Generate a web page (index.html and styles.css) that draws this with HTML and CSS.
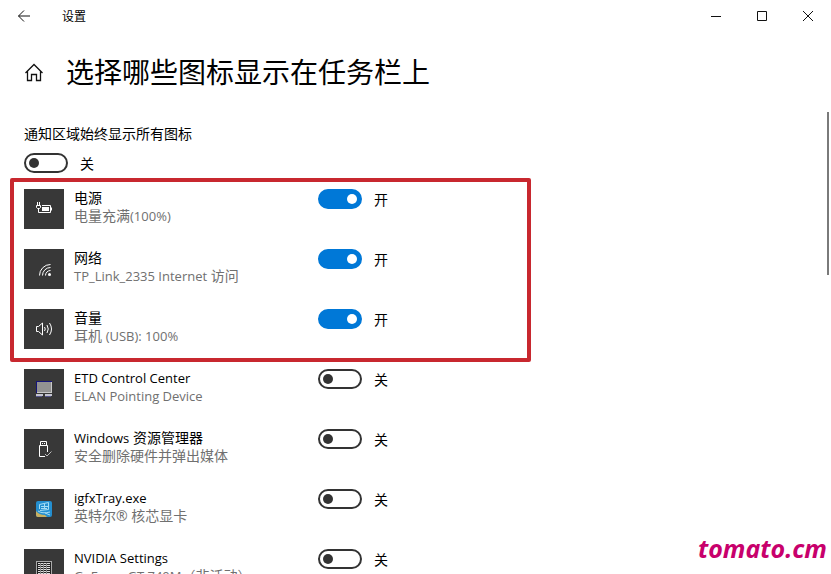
FILE: index.html
```html
<!DOCTYPE html>
<html lang="zh-CN">
<head>
  <meta charset="UTF-8">
  <meta name="viewport" content="width=device-width, initial-scale=1.0">
  <title>设置</title>
  <link rel="stylesheet" href="styles.css">
</head>
<body>
  <header class="titlebar">
    <button class="back" aria-label="返回">
      <svg width="14" height="14" viewBox="0 0 14 14"><path d="M13 7H1.500M7 1.500L1.500 7L7 12.500"/></svg>
    </button>
    <span class="app-name">设置</span>
    <div class="window-buttons">
      <button aria-label="最小化"><svg width="10" height="10" viewBox="0 0 10 10"><path d="M0 5.500H10"/></svg></button>
      <button aria-label="最大化"><svg width="10" height="10" viewBox="0 0 10 10"><path d="M.5 .5H9.500V9.500H.5Z"/></svg></button>
      <button aria-label="关闭"><svg width="10" height="10" viewBox="0 0 10 10"><path d="M0 0L10 10M10 0L0 10"/></svg></button>
    </div>
  </header>

  <main>
    <div class="heading">
      <a href="#" aria-label="主页">
        <svg width="20" height="20" viewBox="0 0 20 20"><path stroke-width="1.300" d="M1.500 11L10 2.500L18.500 11M3.500 9.500V18.500H7.500V12.500H12.500V18.500H16.500V9.500"/></svg>
      </a>
      <h1>选择哪些图标显示在任务栏上</h1>
    </div>

    <div class="show-all">
      <label for="all">通知区域始终显示所有图标</label>
      <div class="switch">
        <input type="checkbox" id="all"><span>关</span>
      </div>
    </div>

    <ul class="icons marked">
      <li>
        <div class="tile">
          <svg width="16" height="16" viewBox="0 0 16 16">
            <path d="M1.500 1V4M3.500 1V4M.5 4.500H4.500V6.500L3.500 7.500H1.500L.5 6.500ZM2.500 8V11.500H14.500V4.500H6M15.500 6.500V9.500"/>
            <path class="solid" d="M6 6H13V10H6Z"/>
          </svg>
        </div>
        <label for="power">电源<small>电量充满<span class="en">(100%)</span></small></label>
        <div class="switch"><input type="checkbox" id="power" checked><span>开</span></div>
      </li>
      <li>
        <div class="tile">
          <svg width="16" height="16" viewBox="0 0 16 16">
            <path d="M3.500 14.500A11 11 0 0 1 14.500 3.500M6.500 14.500A8 8 0 0 1 14.500 6.500M9.500 14.500A5 5 0 0 1 14.500 9.500"/>
            <circle class="solid" cx="13.500" cy="13.500" r="1.500"/>
          </svg>
        </div>
        <label for="network">网络<small><span class="en">TP_Link_2335 Internet</span> 访问</small></label>
        <div class="switch"><input type="checkbox" id="network" checked><span>开</span></div>
      </li>
      <li>
        <div class="tile">
          <svg width="16" height="16" viewBox="0 0 16 16">
            <path d="M.5 5.500H2.500L6.500 2V14L2.500 10.500H.5ZM8.500 6Q10 8 8.500 10M11 4Q13.500 8 11 12M13.500 2Q17.500 8 13.500 14"/>
          </svg>
        </div>
        <label for="volume">音量<small>耳机 <span class="en">(USB): 100%</span></small></label>
        <div class="switch"><input type="checkbox" id="volume" checked><span>开</span></div>
      </li>
    </ul>

    <ul class="icons">
      <li>
        <div class="tile">
          <svg class="color" width="16" height="16" viewBox="0 0 16 16">
            <path fill="#c8c8c8" d="M0 0H16V12H0Z"/>
            <path fill="#15157a" d="M0 0H16V1H1V12H0Z"/>
            <path fill="#929292" d="M1 1H15V11H1Z"/>
            <path fill="#c5c5d0" d="M0 13H7V15H0ZM9 13H16V15H9Z"/>
            <path fill="#55558a" d="M0 15H6V16H0ZM9 15H15V16H9Z"/>
          </svg>
        </div>
        <label for="etd"><span class="en">ETD Control Center</span><small><span class="en">ELAN Pointing Device</span></small></label>
        <div class="switch"><input type="checkbox" id="etd"><span>关</span></div>
      </li>
      <li>
        <div class="tile">
          <svg width="16" height="16" viewBox="0 0 16 16">
            <path d="M4.500 4.500V.5H10.500V4.500M3.500 4.500H11.500V11M9 15.500H3.500V4.500M6 2.500H7M8 2.500H9"/>
            <path class="tick" d="M9 13L11 15L15.500 10.500"/>
          </svg>
        </div>
        <label for="explorer"><span class="en">Windows</span> 资源管理器<small>安全删除硬件并弹出媒体</small></label>
        <div class="switch"><input type="checkbox" id="explorer"><span>关</span></div>
      </li>
      <li>
        <div class="tile">
          <svg class="color" width="16" height="16" viewBox="0 0 16 16">
            <rect width="16" height="16" rx="2" fill="#248fd0"/>
            <path fill="#c8b060" d="M0 10Q3 14 9 14L11 16H2Q0 16 0 14Z"/>
            <path fill="none" stroke="#a5ddf5" d="M3.500 8V3.500L12.500 1.500V8.500L4 9.500M5 5.500H12M5 7.500H11M8.500 3V8M2 10Q6 13 14 11M9 12L14 14"/>
          </svg>
        </div>
        <label for="igfx"><span class="en">igfxTray.exe</span><small>英特尔® 核芯显卡</small></label>
        <div class="switch"><input type="checkbox" id="igfx"><span>关</span></div>
      </li>
      <li>
        <div class="tile">
          <svg class="color" width="16" height="16" viewBox="0 0 16 16">
            <path fill="#222" d="M0 0H16V16H0Z"/>
            <path fill="#aaa" d="M0 0H16V1H0ZM0 1H1V14H0ZM15 1H16V14H15Z"/>
            <path fill="none" stroke="#ddd" d="M2 2.500H14M2 4.500H14M2 6.500H14M2 8.500H14M2 10.500H14M2 12.500H14"/>
            <path fill="none" stroke="#888" d="M4.500 2V13M7.500 2V13M10.500 2V13"/>
          </svg>
        </div>
        <label for="nvidia"><span class="en">NVIDIA Settings</span><small><span class="en">GeForce GT 740M</span>（非活动）</small></label>
        <div class="switch"><input type="checkbox" id="nvidia"><span>关</span></div>
      </li>
    </ul>
  </main>

  <div class="scrollbar"></div>
  <div class="watermark">tomato.cm</div>
</body>
</html>
```
FILE: styles.css
```css
* {
  box-sizing: border-box;
}
body {
  font-family: "Open Sans", "Noto Sans CJK SC", sans-serif;
  font-size: 14px;
  line-height: 18px;
  margin: 0;
  height: 100vh;
  overflow: hidden;
  position: relative;
  background: #fff;
  color: #000;
}
svg {
  display: block;
  fill: none;
  stroke: #111;
}
button {
  display: flex;
  align-items: center;
  justify-content: center;
  border: none;
  background: none;
  padding: 0;
  height: 32px;
}
.titlebar {
  display: flex;
  align-items: center;
  height: 32px;
}
.back {
  width: 48px;
}
.app-name {
  font-size: 12px;
  line-height: 20px;
  padding-top: 2px;
  margin-left: 14px;
}
.window-buttons {
  display: flex;
  margin-left: auto;
}
.window-buttons button {
  width: 46px;
}
main {
  padding: 20px 24px 0;
}
.heading {
  display: flex;
  align-items: center;
  gap: 22px;
  height: 40px;
}
h1 {
  margin: 0;
  font-size: 28px;
  line-height: 40px;
  font-weight: normal;
}
.show-all {
  margin-top: 33px;
}
.show-all label {
  display: block;
  margin-bottom: 10px;
}
.switch {
  display: flex;
  gap: 12px;
  height: 20px;
}
.switch span {
  line-height: 22px;
}
.switch input {
  appearance: none;
  position: relative;
  width: 44px;
  height: 20px;
  margin: 0;
  border: 2px solid #333;
  border-radius: 10px;
}
.switch input::before {
  content: "";
  position: absolute;
  top: 3px;
  left: 3px;
  width: 10px;
  height: 10px;
  border-radius: 50%;
  background: #333;
}
.switch input:checked {
  border-color: #0078d7;
  background: #0078d7;
}
.switch input:checked::before {
  left: 27px;
  background: #fff;
}
.icons {
  list-style: none;
  margin: 0;
  padding: 0;
  display: flex;
  flex-direction: column;
  gap: 20px;
}
.marked {
  max-width: 521px;
  margin: 5px 0 7px -14px;
  padding: 7px 10px 9px;
  border: 4px solid #c8282f;
  border-radius: 2px;
}
.icons li {
  display: grid;
  grid-template-columns: 40px 234px auto;
  gap: 10px;
  justify-content: start;
  height: 40px;
}
.tile {
  display: flex;
  align-items: center;
  justify-content: center;
  background: #383838;
}
.tile svg {
  stroke: #fff;
}
.tile .solid {
  fill: #fff;
  stroke: none;
}
.tile .tick {
  stroke: #bbb;
}
.tile .color {
  stroke: none;
}
.icons label {
  white-space: nowrap;
}
.icons small {
  display: block;
  font-size: 14px;
  color: #707070;
}
/* latin letters run wider than the chinese ones */
.en {
  font-size: 13px;
}
.scrollbar {
  position: absolute;
  top: 112px;
  right: 2px;
  width: 2px;
  height: 163px;
  background: #7a7a7a;
}
.watermark {
  position: absolute;
  right: 4px;
  bottom: 10px;
  font-size: 25px;
  line-height: 32px;
  font-weight: bold;
  font-style: italic;
  color: #c8006c;
}
```
